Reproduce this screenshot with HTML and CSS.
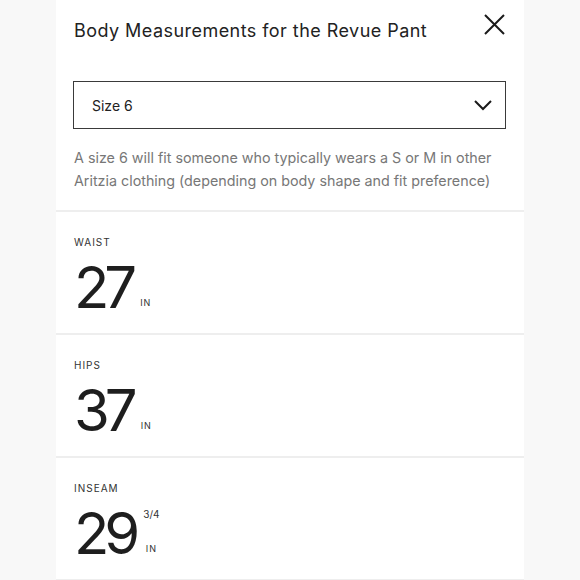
FILE: index.html
```html
<!DOCTYPE html>
<html lang="en">
<head>
<meta charset="utf-8">
<title>Body Measurements</title>
<link rel="stylesheet" href="styles.css">
</head>
<body>
<div class="panel">
  <div class="header">
    <h1 class="title">Body Measurements for the Revue Pant</h1>
    <button class="close" aria-label="Close">
      <svg width="21" height="21" viewBox="0 0 21 21"><path d="M1 1L20 20M20 1L1 20" stroke="#1a1a1a" stroke-width="2" fill="none"/></svg>
    </button>
  </div>
  <div class="select">
    <span class="select-text">Size 6</span>
    <svg class="chev" width="18" height="12" viewBox="0 0 18 12"><path d="M1 2L9 10L17 2" stroke="#1a1a1a" stroke-width="2" fill="none"/></svg>
  </div>
  <p class="desc">A size 6 will fit someone who typically wears a S or M in other Aritzia clothing (depending on body shape and fit preference)</p>
  <div class="section">
    <div class="label">WAIST</div>
    <div class="value">
      <span class="num">27</span>
      <span class="unit"><span class="in">IN</span></span>
    </div>
  </div>
  <div class="section">
    <div class="label">HIPS</div>
    <div class="value">
      <span class="num">37</span>
      <span class="unit"><span class="in">IN</span></span>
    </div>
  </div>
  <div class="section last">
    <div class="label">INSEAM</div>
    <div class="value">
      <span class="num">29</span>
      <span class="unit split"><span class="frac">3/4</span><span class="in">IN</span></span>
    </div>
  </div>
</div>
</body>
</html>
```

FILE: styles.css
```css
html, body {
  margin: 0;
  padding: 0;
}
body {
  background: #f8f8f8;
  font-family: Inter, "Noto Sans", sans-serif;
  color: #222;
}
.panel {
  width: 468px;
  margin-left: 56px;
  min-height: 580px;
  background: #fff;
}
.header {
  display: flex;
  justify-content: space-between;
  align-items: flex-start;
  padding: 14px 19px 0 18px;
}
.title {
  margin: 5px 0 0 0;
  font-size: 18px;
  line-height: 24px;
  font-weight: 400;
  letter-spacing: 0.45px;
  color: #222;
}
.close {
  border: 0;
  background: none;
  padding: 0;
  width: 21px;
  height: 21px;
  display: block;
}
.close svg { display: block; }
.select {
  margin: 38px 18px 0 17px;
  height: 48px;
  box-sizing: border-box;
  border: 1.5px solid #3a3a3a;
  display: flex;
  align-items: center;
  justify-content: space-between;
  padding: 0 13px 0 18px;
}
.select-text {
  font-size: 14px;
  color: #222;
}
.chev { display: block; }
.desc {
  margin: 17px 18px 18px 18px;
  font-size: 14.3px;
  line-height: 23px;
  color: #777;
}
.section {
  border-top: 2px solid #eeeeee;
  padding: 24px 18px 17px 18px;
}
.section.last {
  border-bottom: 2px solid #eeeeee;
}
.label {
  font-size: 10px;
  line-height: 12px;
  letter-spacing: 1px;
  color: #333;
}
.value {
  display: flex;
  margin-top: 10px;
}
.num {
  font-size: 58px;
  line-height: 58px;
  height: 58px;
  letter-spacing: -5px;
  color: #1e1e1e;
}
.unit {
  display: flex;
  flex-direction: column;
  justify-content: flex-end;
  align-items: center;
  margin-left: 8px;
  height: 58px;
}
.unit.split {
  justify-content: space-between;
}
.frac {
  font-size: 10px;
  line-height: 10px;
  margin-top: 5px;
  color: #333;
}
.in {
  font-size: 9px;
  line-height: 9px;
  letter-spacing: 1px;
  margin-bottom: 9px;
  color: #333;
}
```
